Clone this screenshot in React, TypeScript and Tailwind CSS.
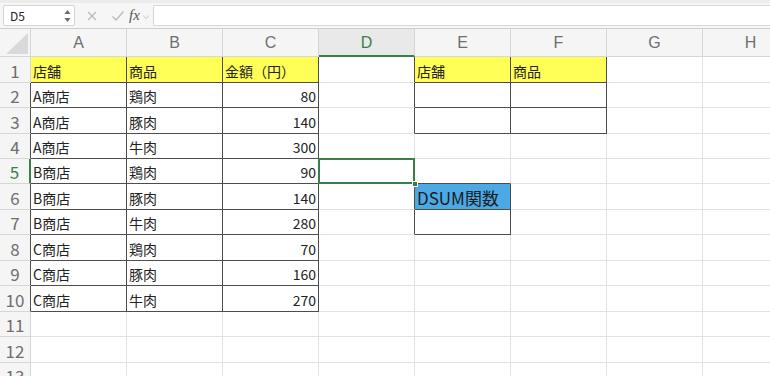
import React from "react";

const COLS = ["A", "B", "C", "D", "E", "F", "G", "H"];
const ROW_HEIGHTS = [26, 25, 26, 25, 25, 26, 25, 26, 25, 26, 25, 26, 25];

type CellData = { text: string; align?: "left" | "right"; bg?: string; big?: boolean };

const DATA: Record<string, CellData> = {
  A1: { text: "店舗", bg: "yellow" },
  B1: { text: "商品", bg: "yellow" },
  C1: { text: "金額（円）", bg: "yellow" },
  E1: { text: "店舗", bg: "yellow" },
  F1: { text: "商品", bg: "yellow" },
  E6: { text: "DSUM関数", bg: "blue", big: true },
};

const rows: [string, string, number][] = [
  ["A商店", "鶏肉", 80],
  ["A商店", "豚肉", 140],
  ["A商店", "牛肉", 300],
  ["B商店", "鶏肉", 90],
  ["B商店", "豚肉", 140],
  ["B商店", "牛肉", 280],
  ["C商店", "鶏肉", 70],
  ["C商店", "豚肉", 160],
  ["C商店", "牛肉", 270],
];
rows.forEach(([shop, item, price], i) => {
  const r = i + 2;
  DATA[`A${r}`] = { text: shop };
  DATA[`B${r}`] = { text: item };
  DATA[`C${r}`] = { text: String(price), align: "right" };
});

function inTable(r: number, c: number) {
  if (r >= 1 && r <= 10 && c >= 0 && c <= 2) return true;
  if (r >= 1 && r <= 3 && (c === 4 || c === 5)) return true;
  if (r >= 6 && r <= 7 && c === 4) return true;
  return false;
}

function FormulaBar() {
  return (
    <div className="flex h-[29px] items-center border-b border-[#cfcfcf] border-t-[3px] border-t-[#ececec] bg-[#f6f6f6] pl-[3px]">
      <div className="relative flex h-[21px] w-[72px] items-center rounded-[2px] border border-[#d4d4d4] bg-white pl-[6px] text-[12px] text-[#222]">
        D5
        <svg className="absolute right-[3px] top-[3px]" width="7" height="14" viewBox="0 0 7 14">
          <path d="M3.5 1 L6.5 5 L0.5 5 Z" fill="#6a6a6a" />
          <path d="M3.5 13 L6.5 9 L0.5 9 Z" fill="#6a6a6a" />
        </svg>
      </div>
      <svg className="ml-[11px]" width="12" height="12" viewBox="0 0 12 12">
        <path d="M2 2 L10 10 M10 2 L2 10" stroke="#b9b9b9" strokeWidth="1.3" />
      </svg>
      <svg className="ml-[13px]" width="14" height="12" viewBox="0 0 14 12">
        <path d="M1.5 6.5 L5 10 L12.5 1.5" stroke="#b9b9b9" strokeWidth="1.3" fill="none" />
      </svg>
      <span className="ml-[4px] font-['Liberation_Serif',serif] text-[15px] italic text-[#555]">fx</span>
      <svg className="ml-[2px] mt-[2px]" width="8" height="6" viewBox="0 0 8 6">
        <path d="M1 1.5 L4 4.5 L7 1.5" stroke="#c4c4c4" strokeWidth="1" fill="none" />
      </svg>
      <div className="ml-[3px] h-[21px] flex-1 rounded-l-[2px] border border-r-0 border-[#d8d8d8] bg-white" />
    </div>
  );
}

function HeaderRow() {
  return (
    <div className="flex h-[28px] bg-[#f5f5f5]">
      <div className="relative w-[31px] shrink-0 border-b border-r border-[#d6d6d6]">
        <svg className="absolute left-[6px] top-[4px]" width="22" height="21" viewBox="0 0 22 21">
          <path d="M22 0 L22 21 L0 21 Z" fill="#d9d9d9" />
        </svg>
      </div>
      {COLS.map((c, i) => {
        const active = c === "D";
        return (
          <div
            key={c}
            className={
              "flex shrink-0 items-center justify-center border-r text-[16px] " +
              (i === COLS.length - 1 ? "w-[96px] " : "w-[96px] ") +
              (active
                ? "border-b-2 border-b-[#3c7e4b] border-r-[#d6d6d6] bg-[#e9e9e9] pt-[1px] text-[#3c7e4b]"
                : "border-b border-b-[#d6d6d6] border-r-[#d6d6d6] text-[#6f6f6f]")
            }
          >
            {c}
          </div>
        );
      })}
    </div>
  );
}

function Cell({ r, c }: { r: number; c: number }) {
  const key = `${COLS[c]}${r}`;
  const d = DATA[key];
  const darkR = inTable(r, c) || inTable(r, c + 1);
  const darkB = inTable(r, c) || inTable(r + 1, c);
  const selected = key === "D5";
  let bg = "bg-white";
  if (d?.bg === "yellow") bg = "bg-[#ffff57]";
  if (d?.bg === "blue") bg = "bg-[#4ba9e6]";
  return (
    <div
      className={
        "relative flex w-[96px] shrink-0 items-center border-b border-r " +
        bg +
        " " +
        (darkR ? "border-r-[#4d4d4d] " : "border-r-[#e2e2e2] ") +
        (darkB ? "border-b-[#4d4d4d] " : "border-b-[#e2e2e2] ") +
        (d?.align === "right" ? "justify-end pr-[2px] " : "pl-[2px] ") +
        (d?.big ? "pt-[1px] text-[17px] text-[#1c1c1c]" : "pt-[2px] text-[14px] text-[#222]")
      }
    >
      {d?.text}
      {selected && (
        <>
          <div className="pointer-events-none absolute -left-[1px] -top-[1px] bottom-[-1px] right-[-1px] border-2 border-[#3c7e4b]" />
          <div className="absolute -bottom-[4px] -right-[4px] z-10 h-[6px] w-[6px] border border-white bg-[#3c7e4b]" />
        </>
      )}
    </div>
  );
}

function GridRow({ r, h }: { r: number; h: number }) {
  const active = r === 5;
  const darkEdge = inTable(r, 0) && r >= 2;
  return (
    <div className="flex" style={{ height: h }}>
      <div
        className={
          "flex w-[31px] shrink-0 items-center justify-center border-b border-b-[#d6d6d6] bg-[#f5f5f5] pt-[1px] text-[17px] " +
          (active
            ? "border-r-2 border-r-[#3c7e4b] bg-[#ececec] text-[#3c7e4b]"
            : darkEdge
            ? "border-r border-r-[#4d4d4d] text-[#6f6f6f]"
            : "border-r border-r-[#d6d6d6] text-[#6f6f6f]")
        }
      >
        {r}
      </div>
      {COLS.map((_, c) => (
        <Cell key={c} r={r} c={c} />
      ))}
    </div>
  );
}

export default function App() {
  return (
    <div className="h-[376px] w-[770px] overflow-hidden bg-white font-['Noto_Sans_CJK_JP','Liberation_Sans',sans-serif] leading-none">
      <FormulaBar />
      <div className="font-['Liberation_Sans','Noto_Sans_CJK_JP',sans-serif]">
        <HeaderRow />
      </div>
      {ROW_HEIGHTS.map((h, i) => (
        <GridRow key={i} r={i + 1} h={h} />
      ))}
    </div>
  );
}
